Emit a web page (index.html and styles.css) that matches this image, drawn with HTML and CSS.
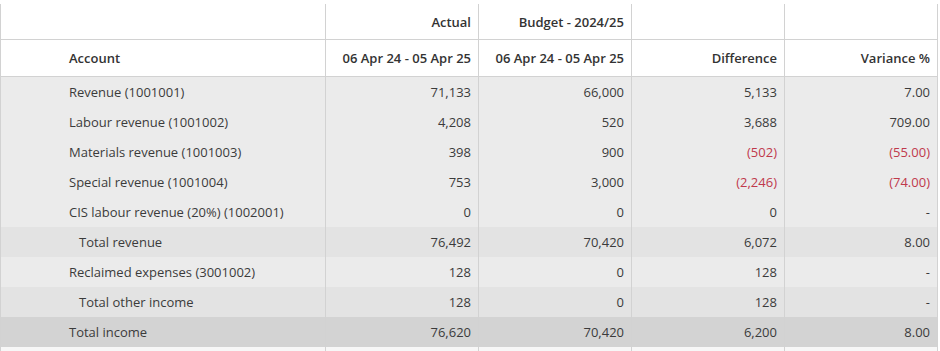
FILE: index.html
```
<!DOCTYPE html>
<html>
<head>
<meta charset="utf-8">
<link rel="stylesheet" href="styles.css">
</head>
<body>
<div class="wrap">
<table class="report">
  <colgroup>
    <col class="c-acc"><col class="c-num"><col class="c-num"><col class="c-num"><col class="c-num">
  </colgroup>
  <thead>
    <tr class="h1">
      <th></th><th class="num">Actual</th><th class="num">Budget - 2024/25</th><th></th><th></th>
    </tr>
    <tr class="h2">
      <th class="acc">Account</th><th class="num">06 Apr 24 - 05 Apr 25</th><th class="num">06 Apr 24 - 05 Apr 25</th><th class="num">Difference</th><th class="num">Variance %</th>
    </tr>
  </thead>
  <tbody>
    <tr><td class="acc">Revenue (1001001)</td><td class="num">71,133</td><td class="num">66,000</td><td class="num">5,133</td><td class="num">7.00</td></tr>
    <tr><td class="acc">Labour revenue (1001002)</td><td class="num">4,208</td><td class="num">520</td><td class="num">3,688</td><td class="num">709.00</td></tr>
    <tr><td class="acc">Materials revenue (1001003)</td><td class="num">398</td><td class="num">900</td><td class="num neg">(502)</td><td class="num neg">(55.00)</td></tr>
    <tr><td class="acc">Special revenue (1001004)</td><td class="num">753</td><td class="num">3,000</td><td class="num neg">(2,246)</td><td class="num neg">(74.00)</td></tr>
    <tr><td class="acc">CIS labour revenue (20%) (1002001)</td><td class="num">0</td><td class="num">0</td><td class="num">0</td><td class="num">-</td></tr>
    <tr class="sub"><td class="acc ind">Total revenue</td><td class="num">76,492</td><td class="num">70,420</td><td class="num">6,072</td><td class="num">8.00</td></tr>
    <tr><td class="acc">Reclaimed expenses (3001002)</td><td class="num">128</td><td class="num">0</td><td class="num">128</td><td class="num">-</td></tr>
    <tr class="sub"><td class="acc ind">Total other income</td><td class="num">128</td><td class="num">0</td><td class="num">128</td><td class="num">-</td></tr>
    <tr class="grand"><td class="acc">Total income</td><td class="num">76,620</td><td class="num">70,420</td><td class="num">6,200</td><td class="num">8.00</td></tr>
    <tr class="blank"><td></td><td></td><td></td><td></td><td></td></tr>
  </tbody>
</table>
</div>
</body>
</html>
```

FILE: styles.css
```
html, body {
  margin: 0;
  padding: 0;
  background: #fff;
}
body {
  font-family: "Open Sans", "Liberation Sans", sans-serif;
  font-size: 13px;
  color: #3b3b3b;
  overflow: hidden;
}
.wrap {
  padding-top: 4px;
}
.report {
  border-collapse: collapse;
  table-layout: fixed;
  width: 938px;
}
.c-acc { width: 325px; }
.c-num { width: 153px; }
.report th, .report td {
  border-left: 1px solid #d2d2d2;
  border-right: 1px solid #d2d2d2;
  padding: 0 7px 0 0;
  white-space: nowrap;
  overflow: hidden;
}
.report th {
  font-weight: 600;
  background: #fff;
  color: #333;
  border-bottom: 1px solid #d2d2d2;
}
.h1 th { height: 35px; }
.h2 th { height: 36px; }
.report .num { text-align: right; }
.report .acc { text-align: left; padding-left: 68px; }
.report .ind { padding-left: 78px; }
.report td { height: 30px; background: #ebebeb; }
.sub td { background: #e3e3e3; }
.grand td { background: #d3d3d3; }
.blank td { background: #f7f7f7; }
.neg { color: #c0394b; }
```
